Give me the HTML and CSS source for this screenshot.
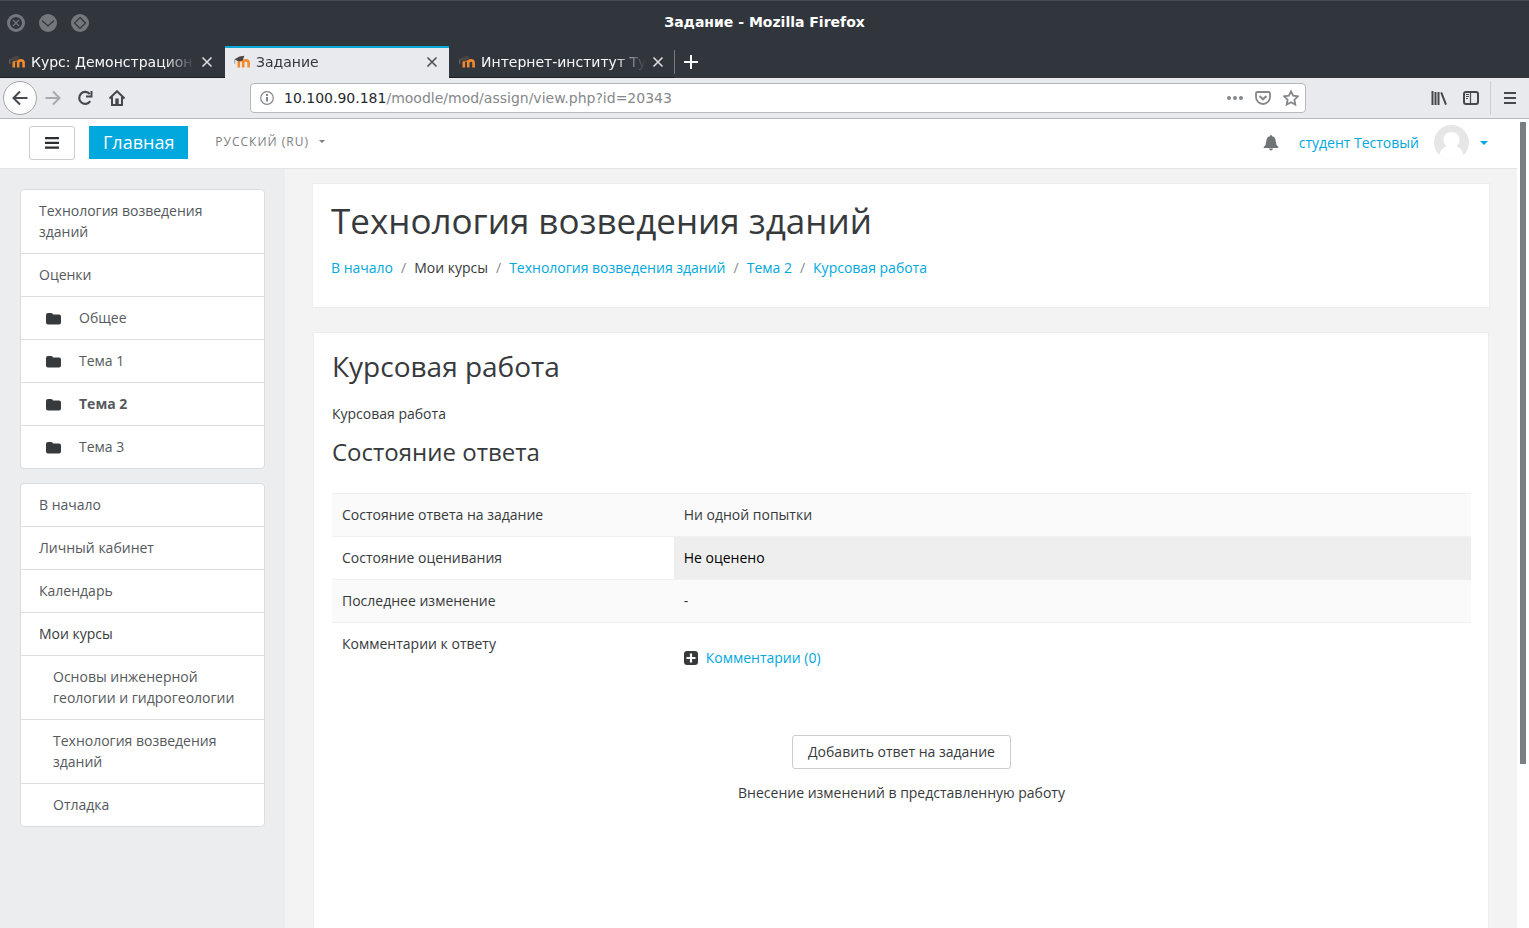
FILE: index.html
```html
<!DOCTYPE html>
<html lang="ru">
<head>
<meta charset="utf-8">
<title>Задание</title>
<link rel="stylesheet" href="styles.css">
</head>
<body>
<svg class="defs" aria-hidden="true">
  <symbol id="moodle" viewBox="0 0 16 14">
    <path d="M4.800 12.500V6.500M9.200 12.500V6.800M9.200 12.500V8q0-2.600 2.700-2.600T14.600 8v4.500" fill="none" stroke="#f08a2c" stroke-width="2.600"/>
    <path d="M4.800 7.500q.5-2 2.400-2t2 2" fill="none" stroke="#f08a2c" stroke-width="2"/>
    <path d="M.5 4.300 5.500 1.500l4.800-.7-1 3-.5 1.800-4.300.8z" fill="#4b4642"/>
    <path d="M.8 4.300v4.500" stroke="#8a8078" stroke-width=".8"/>
  </symbol>
  <symbol id="cross" viewBox="0 0 12 12"><path d="m1.500 1.500 9 9m0-9-9 9" fill="none" stroke="currentColor" stroke-width="1.600"/></symbol>
  <symbol id="folder" viewBox="0 0 16 14"><path d="M0 4Q0 2 2 2h3q2 0 2 1.500h6q2 0 2 2v6q0 2-2 2H2q-2 0-2-2z" fill="#373a3c"/></symbol>
</svg>

<header class="titlebar">
  <div class="window-buttons">
    <button class="window-button" aria-label="Закрыть"><svg viewBox="0 0 18 18"><circle cx="9" cy="9" r="7.500" fill="none" stroke="#74777b" stroke-width="3"/><path d="m6 6 6 6m0-6-6 6" stroke="#74777b" stroke-width="1.200"/></svg></button>
    <button class="window-button" aria-label="Свернуть"><svg viewBox="0 0 18 18"><circle cx="9" cy="9" r="9" fill="#74777b"/><path d="m3 6.500 6 5.500 6-5.500" fill="none" stroke="#31363b" stroke-width="1.200"/></svg></button>
    <button class="window-button" aria-label="Развернуть"><svg viewBox="0 0 18 18"><circle cx="9" cy="9" r="9" fill="#74777b"/><path d="m9 3.500 5.500 5.500L9 14.500 3.500 9z" fill="none" stroke="#31363b" stroke-width="1.200"/></svg></button>
  </div>
  <div class="window-title">Задание - Mozilla Firefox</div>
</header>

<div class="tabs">
  <div class="tab"><svg class="favicon"><use href="#moodle"/></svg><span class="tab-label">Курс: Демонстрацион</span><button class="tab-close" aria-label="Закрыть вкладку"><svg><use href="#cross"/></svg></button></div>
  <div class="tab active"><svg class="favicon"><use href="#moodle"/></svg><span class="tab-label">Задание</span><button class="tab-close" aria-label="Закрыть вкладку"><svg><use href="#cross"/></svg></button></div>
  <div class="tab"><svg class="favicon"><use href="#moodle"/></svg><span class="tab-label">Интернет-институт Ту</span><button class="tab-close" aria-label="Закрыть вкладку"><svg><use href="#cross"/></svg></button></div>
  <button class="new-tab" aria-label="Новая вкладка"><svg viewBox="0 0 14 14"><path d="M7 0v14M0 7h14" stroke="currentColor" stroke-width="2"/></svg></button>
</div>

<div class="toolbar">
  <div class="nav-tools">
    <button class="back" aria-label="Назад"><svg viewBox="0 0 16 16"><path d="M15.500 8H1.500M8 1.500 1.500 8 8 14.500" fill="none" stroke="#45494d" stroke-width="2"/></svg></button>
    <button class="tool faded" aria-label="Вперёд"><svg viewBox="0 0 16 16"><path d="M.5 8h14M8 1.500 14.500 8 8 14.500" fill="none" stroke="currentColor" stroke-width="2"/></svg></button>
    <button class="tool" aria-label="Обновить"><svg viewBox="0 0 16 16"><path d="M13.200 11.200A6 6 0 1 1 12.800 4" fill="none" stroke="currentColor" stroke-width="2.200"/><path d="M15.500 1v6.500H9V5.500h4.500V1z" fill="currentColor"/></svg></button>
    <button class="tool" aria-label="Домой"><svg viewBox="0 0 16 16"><path d="M.5 8.500 8 1.200l7.500 7.300M3 7v8h10V7" fill="none" stroke="currentColor" stroke-width="2"/><path d="M6.300 8.500h3.400V14H6.300z" fill="currentColor"/></svg></button>
  </div>
  <label class="address">
    <svg viewBox="0 0 14 14"><circle cx="7" cy="7" r="6.300" fill="none" stroke="currentColor" stroke-width="1.200"/><path d="M6 6h2v4.500H6zM6 3h2v2H6z" fill="currentColor"/></svg>
    <span class="url" role="textbox" aria-label="Адрес"><b>10.100.90.181</b>/moodle/mod/assign/view.php?id=20343</span>
    <span class="address-actions">
      <svg viewBox="0 0 16 16"><circle cx="2" cy="8" r="2" fill="currentColor"/><circle cx="8" cy="8" r="2" fill="currentColor"/><circle cx="14" cy="8" r="2" fill="currentColor"/></svg>
      <svg viewBox="0 0 16 16"><path d="M2.500 2h11Q15 2 15 3.500V7A7 7 0 0 1 1 7V3.500Q1 2 2.500 2z" fill="none" stroke="currentColor" stroke-width="1.800"/><path d="m4.500 6 3.500 3.300L11.500 6" fill="none" stroke="currentColor" stroke-width="2"/></svg>
      <svg viewBox="0 0 16 16"><path d="m8 1.300 2.100 4.400 4.900.6-3.600 3.400.9 4.900L8 12.200l-4.300 2.400.9-4.900L1 6.300l4.900-.6z" fill="none" stroke="currentColor" stroke-width="1.800"/></svg>
    </span>
  </label>
  <div class="right-tools">
    <button class="tool" aria-label="Библиотека"><svg viewBox="0 0 16 16"><path d="M1.500 1v14M4.500 2v13M7.500 2v13M10.200 2.300 15 14.700" fill="none" stroke="currentColor" stroke-width="2"/></svg></button>
    <button class="tool" aria-label="Боковая панель"><svg viewBox="0 0 16 16"><rect x="1" y="2" width="14" height="12" rx="2" fill="none" stroke="currentColor" stroke-width="2"/><path d="M7.500 2v12" stroke="currentColor" stroke-width="1.200"/><path d="M3 4.500h3M3 6.500h3M3 8.500h2" stroke="currentColor"/></svg></button>
    <button class="tool menu" aria-label="Меню"><svg viewBox="0 0 16 16"><path d="M2 3h12M2 8h12M2 13h12" stroke="currentColor" stroke-width="2"/></svg></button>
  </div>
</div>

<div class="viewport">
  <div class="page">
    <nav class="navbar">
      <button class="drawer-toggle" aria-label="Боковая панель"><svg viewBox="0 0 14 12"><path d="M0 0h14v2.300H0zM0 4.700h14V7H0zM0 9.400h14v2.300H0z" fill="#2c2f31"/></svg></button>
      <a class="brand" href="#">Главная</a>
      <a class="language" href="#">РУССКИЙ (RU)<span class="caret"></span></a>
      <div class="user">
        <button class="bell" aria-label="Уведомления"><svg viewBox="0 0 16 16"><path d="M8 0q1 0 1 1.200 3.500.8 3.700 4.800.1 4 2.600 6v1H.7v-1q2.500-2 2.600-6Q3.500 2 7 1.200 7 0 8 0zM6 13.500h4Q9.700 15.500 8 15.500T6 13.500z" fill="#6f7375"/></svg></button>
        <a class="user-name" href="#">студент Тестовый</a>
        <a class="profile" href="#" aria-label="Профиль"><svg class="avatar" viewBox="0 0 35 35"><defs><clipPath id="face"><circle cx="17.500" cy="17.500" r="17.500"/></clipPath></defs><g clip-path="url(#face)"><path d="M0 0h35v35H0z" fill="#e6e6e6"/><path d="M17.500 7C22 7 25.500 10 25.500 14.500c0 3.500-1.500 5.500-3 7 4 1 7 4 8 13.500h-26c1-9.500 4-12.500 8-13.500-1.500-1.500-3-3.500-3-7C9.500 10 13 7 17.500 7z" fill="#fff"/></g></svg><span class="caret"></span></a>
      </div>
    </nav>
    <div class="columns">
      <aside class="sidebar">
        <nav class="list">
          <a href="#">Технология возведения зданий</a>
          <a href="#">Оценки</a>
          <a class="topic" href="#"><svg><use href="#folder"/></svg>Общее</a>
          <a class="topic" href="#"><svg><use href="#folder"/></svg>Тема 1</a>
          <a class="topic current" href="#"><svg><use href="#folder"/></svg>Тема 2</a>
          <a class="topic" href="#"><svg><use href="#folder"/></svg>Тема 3</a>
        </nav>
        <nav class="list">
          <a href="#">В начало</a>
          <a href="#">Личный кабинет</a>
          <a href="#">Календарь</a>
          <div class="list-title">Мои курсы</div>
          <a class="nested" href="#">Основы инженерной геологии и гидрогеологии</a>
          <a class="nested" href="#">Технология возведения зданий</a>
          <a class="nested" href="#">Отладка</a>
        </nav>
      </aside>
      <main class="content">
        <section class="card heading">
          <h1>Технология возведения зданий</h1>
          <ol class="breadcrumbs">
            <li><a href="#">В начало</a></li>
            <li>Мои курсы</li>
            <li><a href="#">Технология возведения зданий</a></li>
            <li><a href="#">Тема 2</a></li>
            <li><a href="#">Курсовая работа</a></li>
          </ol>
        </section>
        <section class="card assignment">
          <h2>Курсовая работа</h2>
          <p>Курсовая работа</p>
          <h3>Состояние ответа</h3>
          <table class="status">
            <tr><th scope="row">Состояние ответа на задание</th><td>Ни одной попытки</td></tr>
            <tr><th scope="row">Состояние оценивания</th><td class="ungraded">Не оценено</td></tr>
            <tr><th scope="row">Последнее изменение</th><td>-</td></tr>
            <tr><th scope="row">Комментарии к ответу</th><td><a class="comments" href="#"><svg viewBox="0 0 14 14"><rect width="14" height="14" rx="3" fill="#373a3c"/><path d="M7 2.500v9M2.500 7h9" stroke="#fff" stroke-width="2.200"/></svg>Комментарии (0)</a></td></tr>
          </table>
          <div class="submit">
            <button class="add">Добавить ответ на задание</button>
            <p>Внесение изменений в представленную работу</p>
          </div>
        </section>
      </main>
    </div>
  </div>
  <div class="scrollbar"><div class="thumb"></div></div>
</div>
</body>
</html>
```

FILE: styles.css
```css
* { box-sizing: border-box; }

body {
  margin: 0;
  height: 100vh;
  overflow: hidden;
  display: flex;
  flex-direction: column;
  font: 14px/21px "Open Sans", "Noto Sans", sans-serif;
  color: #373a3c;
  background: #fff;
}

button {
  font: inherit;
  color: inherit;
  padding: 0;
  border: 0;
  background: none;
}

a { color: #00a8de; text-decoration: none; }
svg { display: block; flex: none; }
.defs { position: absolute; width: 0; height: 0; }

/* Window frame */
.titlebar, .tabs, .toolbar {
  flex: none;
  display: flex;
  font-family: "DejaVu Sans", sans-serif;
}
.titlebar {
  height: 46px;
  align-items: center;
  padding: 0 7px 2px;
  background: #31363d;
  border-top: 1px solid #454b53;
  color: #fff;
}
.window-buttons { flex: 1; display: flex; gap: 14px; }
.window-button svg { width: 18px; height: 18px; }
.window-title { font-weight: bold; }
.titlebar::after { content: ""; flex: 1; }

.tabs {
  height: 32px;
  background: #31363d;
  color: #fafafa;
}
.tab {
  width: 225px;
  display: flex;
  align-items: center;
  gap: 6px;
  padding: 1px 12px 0 9px;
  border-bottom: 1px solid #1c1f24;
}
.tab.active {
  background: #e9eaee;
  color: #31363b;
  border-top: 2px solid #0aa9d6;
  border-bottom: 0;
  width: 224px;
  padding: 0 11px 2px 9px;
}
.tab:nth-child(3) { padding-left: 10px; }
.favicon { width: 16px; height: 14px; }
.tab-label {
  flex: 1;
  white-space: nowrap;
  mask-image: linear-gradient(to right, #000 calc(100% - 32px), transparent);
}
.tab-close { opacity: .85; }
.tab-close svg { width: 12px; height: 12px; }
.new-tab {
  flex: 1;
  display: flex;
  align-items: center;
  margin: 4px 0;
  padding-left: 9px;
  border-left: 1px solid #777b80;
}
.new-tab svg { width: 14px; height: 14px; }

.toolbar {
  height: 41px;
  align-items: center;
  background: #e9eaee;
  border-bottom: 1px solid #b6b8bb;
  color: #45494d;
}
.nav-tools {
  width: 250px;
  display: flex;
  align-items: center;
  gap: 16px;
  padding-left: 3px;
}
.back {
  width: 34px;
  height: 34px;
  margin-right: -8px;
  display: grid;
  place-items: center;
  background: #fcfcfc;
  border: 1px solid #a4a6a9;
  border-radius: 50%;
}
.back svg, .tool svg, .address-actions svg { width: 16px; height: 16px; }
.faded { color: #a7a9ac; }
.address {
  flex: 1;
  height: 30px;
  display: flex;
  align-items: center;
  gap: 10px;
  padding: 0 6px 0 9px;
  background: #fff;
  border: 1px solid #b6b8bc;
  border-radius: 4px;
  color: #85888b;
}
.address > svg { width: 14px; height: 14px; }
.url { flex: 1; }
.url b { font-weight: normal; color: #25292c; }
.address-actions { display: flex; gap: 12px; }
.right-tools {
  width: 223px;
  display: flex;
  justify-content: flex-end;
  align-items: center;
  gap: 16px;
  padding-right: 11px;
}
.menu {
  height: 34px;
  margin-left: -5px;
  padding-left: 11px;
  border-left: 1px solid #cccdd1;
}

/* Site */
.viewport { flex: 1; min-height: 0; display: flex; }
.page { flex: 1; min-width: 0; display: flex; flex-direction: column; }
.scrollbar { width: 12px; padding: 3px; }
.thumb { width: 6px; height: 80%; background: #7a7f83; }

.navbar {
  height: 50px;
  flex: none;
  display: flex;
  align-items: center;
  padding: 0 29px 2px;
  border-bottom: 1px solid #e4e5e6;
}
.drawer-toggle {
  width: 46px;
  height: 34px;
  display: grid;
  place-items: center;
  border: 1px solid #ccc;
  border-radius: 3px;
}
.drawer-toggle svg { width: 14px; height: 12px; }
.brand {
  margin-left: 14px;
  padding: 4px 14px;
  font-size: 18px;
  line-height: 25px;
  color: #fff;
  background: #00a8de;
}
.language {
  margin-left: 27px;
  padding-bottom: 2px;
  display: flex;
  align-items: center;
  gap: 10px;
  font-size: 12px;
  letter-spacing: 1px;
  color: #7b7d7f;
}
.caret {
  border: 4px solid transparent;
  border-top-color: currentColor;
  border-bottom: 0;
}
.language .caret { border-width: 3px 3px 0; }
.user { margin-left: auto; display: flex; align-items: center; }
.bell svg { width: 16px; height: 16px; }
.user-name { margin: 0 15px 0 20px; }
.profile { display: flex; align-items: center; gap: 11px; }
.avatar { width: 35px; height: 35px; }

.columns { flex: 1; min-height: 0; display: flex; background: #f3f3f3; }
.sidebar {
  width: 285px;
  flex: none;
  padding: 20px;
  background: #ebedef;
}
.list {
  margin-bottom: 14px;
  background: #fff;
  border: 1px solid #dcdddf;
  border-radius: 4px;
}
.list > * {
  display: block;
  padding: 10px 18px 11px;
  color: #55595c;
}
.list > * + * { border-top: 1px solid #dcdddf; }
.list .list-title { color: #373a3c; }
.list .topic { display: flex; align-items: center; gap: 17px; padding-left: 25px; }
.list .current { font-weight: bold; }
.list .nested { padding-left: 32px; }
.topic svg { width: 16px; height: 14px; }

.content {
  flex: 1;
  min-width: 0;
  display: flex;
  flex-direction: column;
  gap: 24px;
  padding: 14px 27px 0;
}
.card { padding: 17px 18px; background: #fff; border: 1px solid #ededed; }
.heading { padding-bottom: 29px; }
h1, h2, h3, p { margin: 0; font-weight: normal; }
h1 { font-size: 35px; line-height: 39px; }
.breadcrumbs {
  display: flex;
  margin: 17px 0 0;
  padding: 0;
  list-style: none;
}
.breadcrumbs li + li::before { content: "/"; padding: 0 8px; color: #818a91; }

.assignment { flex: 1; margin: 0 1px; border-bottom: 0; padding-top: 16px; padding-right: 17px; }
h2 { font-size: 28px; line-height: 34px; }
.assignment > p { margin: 20px 0 14px; }
h3 { font-size: 24px; line-height: 28px; }
.status {
  width: 100%;
  margin-top: 27px;
  border-collapse: collapse;
  table-layout: fixed;
}
.status th, .status td {
  padding: 10px 10px 11px;
  border-top: 1px solid #f0f0f0;
  font-weight: normal;
  text-align: left;
  vertical-align: top;
}
.status th { width: 30%; }
.status tr:nth-child(odd) { background: #fafafa; }
.status .ungraded { background: #eee; color: #000; }
.comments { display: flex; align-items: center; gap: 8px; margin: 14px 0; }
.comments svg { width: 14px; height: 14px; }
.submit {
  display: flex;
  flex-direction: column;
  align-items: center;
  gap: 13px;
  margin-top: 42px;
}
.add {
  height: 34px;
  padding: 0 15px 2px;
  border: 1px solid #ccc;
  border-radius: 3px;
}
```
